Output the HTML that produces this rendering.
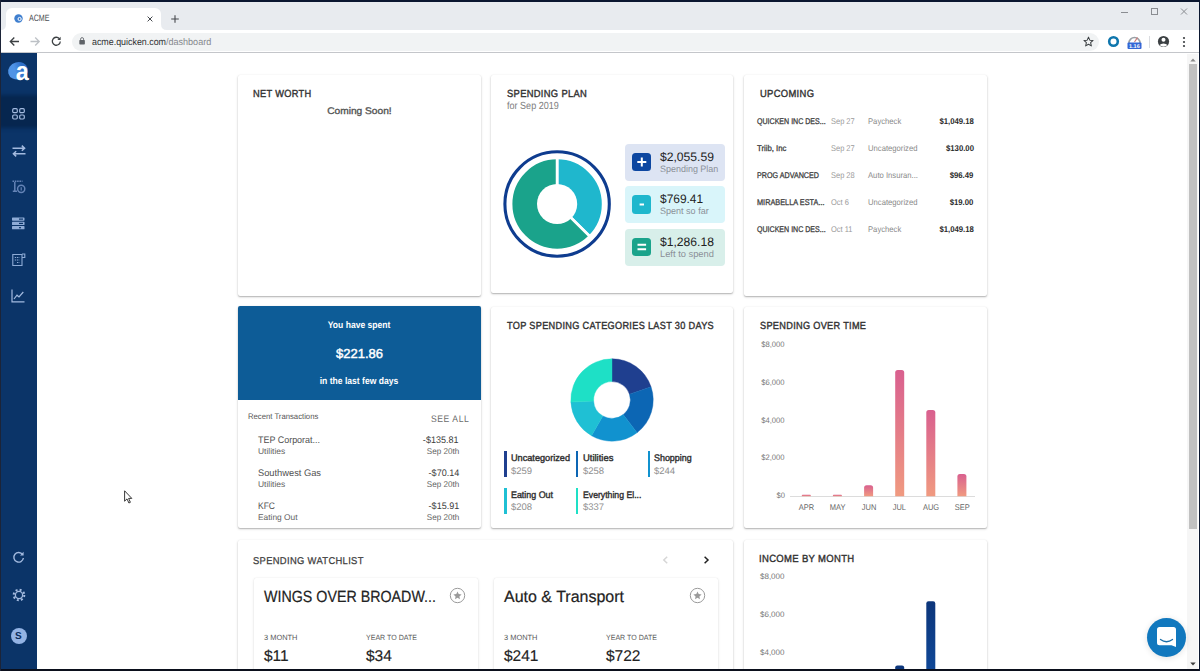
<!DOCTYPE html>
<html lang="en">
<head>
<meta charset="utf-8">
<title>ACME</title>
<style>
*{box-sizing:border-box;margin:0;padding:0}
html,body{width:1200px;height:671px;overflow:hidden;background:#0b1730;font-family:"Liberation Sans",sans-serif}
#root{position:absolute;left:0;top:0;width:1200px;height:671px;overflow:hidden}
.x{position:absolute;white-space:pre;display:block}
.card{position:absolute;background:#fff;border-radius:2px;box-shadow:0 1px 2.5px rgba(0,0,0,.22),0 1px 1px rgba(0,0,0,.12),0 0 1px rgba(0,0,0,.07)}
svg{position:absolute;overflow:visible}
</style>
</head>
<body>
<div id="root">
<div style="position:absolute;left:1px;top:2px;width:1198px;height:667px;background:#fff;"></div>
<div style="position:absolute;left:1px;top:2px;width:1198px;height:28px;background:#e8ebef;"></div>
<div style="position:absolute;left:6px;top:8px;width:155px;height:22px;background:#fff;border-radius:6px 6px 0 0;"></div>
<svg style="left:1px;top:24px" width="170" height="6" viewBox="0 0 170 6"><path d="M160 6V0Q160 6 166 6Z" fill="#fff"/><path d="M5 6V0Q5 6 0 6Z" fill="#fff"/></svg>
<svg style="left:14px;top:14px" width="9" height="9" viewBox="0 0 9 9"><circle cx="4.5" cy="4.5" r="4.2" fill="#3f7fcf"/><circle cx="5.6" cy="5" r="1.6" fill="none" stroke="#fff" stroke-width="1"/></svg>
<span class="x" style="left:29.00px;top:12.79px;font-size:9.2px;line-height:11.04px;color:#4a4d52;transform:scaleX(0.7722) rotate(.03deg);transform-origin:0 0;">ACME</span>
<svg style="left:147.3px;top:15.8px" width="6" height="6" viewBox="0 0 6 6"><path d="M0.6 0.6L5.4 5.4M5.4 0.6L0.6 5.4" stroke="#45484d" stroke-width="1" fill="none"/></svg>
<svg style="left:170.8px;top:14.7px" width="8" height="8" viewBox="0 0 8 8"><path d="M4 0.2V7.8M0.2 4H7.8" stroke="#45484d" stroke-width="1.1" fill="none"/></svg>
<svg style="left:1120px;top:7px" width="70" height="10" viewBox="0 0 70 10"><path d="M1 5.5H8" stroke="#8a8d92" stroke-width="1"/><rect x="31.5" y="1.5" width="6" height="6" fill="none" stroke="#8a8d92" stroke-width="1"/><path d="M61 1.5L67 7.5M67 1.5L61 7.5" stroke="#8a8d92" stroke-width="1"/></svg>
<div style="position:absolute;left:1px;top:30px;width:1198px;height:23px;background:#fff;"></div>
<div style="position:absolute;left:1px;top:52.4px;width:1198px;height:1.1px;background:#c4c6ca;"></div>
<svg style="left:9px;top:36px" width="56" height="11" viewBox="0 0 56 11"><path d="M10 5.5H1.5M5.3 1.5L1.3 5.5L5.3 9.5" stroke="#3c4043" stroke-width="1.3" fill="none"/><path d="M21.5 5.5H30M26.2 1.5L30.2 5.5L26.2 9.5" stroke="#bdc1c6" stroke-width="1.3" fill="none"/><path d="M50.3 2.6A4 4 0 1 0 51.3 5.5" stroke="#3c4043" stroke-width="1.3" fill="none"/><path d="M51.6 0.8V4H48.4Z" fill="#3c4043"/></svg>
<div style="position:absolute;left:72px;top:32.5px;width:1027px;height:18px;background:#f1f3f4;border-radius:9px;"></div>
<svg style="left:78.8px;top:37.2px" width="6.2" height="7.8" viewBox="0 0 7 9"><rect x="0.3" y="3.6" width="6.4" height="5" rx="0.8" fill="#5f6368"/><path d="M1.8 3.8V2.4A1.7 1.7 0 0 1 5.2 2.4V3.8" stroke="#5f6368" stroke-width="1" fill="none"/></svg>
<span class="x" style="left:92.30px;top:35.52px;font-size:9.7px;line-height:11.64px;color:#2e3033;transform:scaleX(0.9162) rotate(.03deg);transform-origin:0 0;">acme.quicken.com</span>
<span class="x" style="left:166.30px;top:35.52px;font-size:9.7px;line-height:11.64px;color:#85888d;transform:scaleX(0.9323) rotate(.03deg);transform-origin:0 0;">/dashboard</span>
<svg style="left:1083px;top:36px" width="11" height="11" viewBox="0 0 24 24"><path d="M12 2.5l2.9 6.6 7.1.7-5.4 4.8 1.6 7L12 17.9 5.8 21.6l1.6-7L2 9.8l7.1-.7z" fill="none" stroke="#3c4043" stroke-width="2.2" stroke-linejoin="round"/></svg>
<svg style="left:1107px;top:35px" width="13" height="13" viewBox="0 0 13 13"><circle cx="6.5" cy="6.5" r="4.3" fill="none" stroke="#0f76ad" stroke-width="2.6"/></svg>
<svg style="left:1126px;top:34px" width="17" height="16" viewBox="0 0 17 16"><path d="M3 9A5.5 5.5 0 0 1 14 9" fill="none" stroke="#9aa0a6" stroke-width="1.6"/><path d="M8.5 8L11.5 3.5" stroke="#c77" stroke-width="1.2"/><rect x="1.5" y="8.5" width="14" height="6.5" rx="1" fill="#3367d6"/></svg>
<span class="x" style="left:1129.14px;top:43.09px;font-size:5.5px;line-height:6.6px;color:#fff;font-weight:bold;transform:scaleX(1.0000) rotate(.03deg);transform-origin:50% 0;">1.16</span>
<div style="position:absolute;left:1149px;top:36px;width:1px;height:12px;background:#dadce0;"></div>
<svg style="left:1157px;top:35px" width="13" height="13" viewBox="0 0 13 13"><circle cx="6.5" cy="6.5" r="5.6" fill="#3c4043"/><circle cx="6.5" cy="4.8" r="2" fill="#fff"/><path d="M2.6 10A4.4 3 0 0 1 10.4 10A5.3 5.3 0 0 1 2.6 10Z" fill="#fff"/></svg>
<svg style="left:1182px;top:36px" width="4" height="12" viewBox="0 0 4 12"><circle cx="2" cy="2" r="1.1" fill="#3c4043"/><circle cx="2" cy="6" r="1.1" fill="#3c4043"/><circle cx="2" cy="10" r="1.1" fill="#3c4043"/></svg>
<div style="position:absolute;left:1px;top:53.4px;width:36px;height:616px;background:#0b3468;"></div>
<div style="position:absolute;left:1px;top:98px;width:36px;height:27px;background:#06264f;box-shadow:0 0 4px 3px #06264f;clip-path:inset(-8px 0 -8px 0);"></div>
<svg style="left:0;top:0" width="40" height="90" viewBox="0 0 40 90"><defs><linearGradient id="lg" x1="0" y1="0" x2="1" y2="0"><stop offset="0.35" stop-color="#4f94e6"/><stop offset="0.75" stop-color="#2f6fc8"/></linearGradient></defs><ellipse cx="18" cy="70.8" rx="10" ry="8.6" fill="url(#lg)" transform="rotate(-15 18 70.8)"/></svg>
<span class="x" style="left:14.57px;top:55.69px;font-size:26px;line-height:31.2px;color:#fff;font-weight:bold;transform:scaleX(0.9000) rotate(.03deg);transform-origin:50% 0;">a</span>
<svg style="left:12.3px;top:108px" width="13" height="12" viewBox="0 0 13 12" fill="none" stroke="#a3badf" stroke-width="1.2"><rect x="0.7" y="0.7" width="4.6" height="4" rx="1.2"/><rect x="7.7" y="0.7" width="4.6" height="4" rx="1.2"/><rect x="0.7" y="7" width="4.6" height="4" rx="1.2"/><rect x="7.7" y="7" width="4.6" height="4" rx="1.2"/></svg>
<svg style="left:11.5px;top:144.6px" width="14" height="12" viewBox="0 0 14 12" fill="none" stroke="#a3badf" stroke-width="1.5"><path d="M0.5 3.2H12.5M9.8 0.6L12.6 3.2L9.8 5.8"/><path d="M13.5 8.8H1.5M4.2 6.2L1.4 8.8L4.2 11.4"/></svg>
<svg style="left:11.5px;top:180px" width="14" height="14" viewBox="0 0 14 14" fill="none" stroke="#6483b6" stroke-width="1.5"><path d="M0.5 1.2H10.5" stroke-dasharray="1.6 0.7"/><path d="M2.8 2V11M0.8 11.2H5"/><circle cx="9.2" cy="8.8" r="3.6"/><path d="M9.2 7.2V10.4" stroke-width="1.2"/></svg>
<svg style="left:12px;top:217px" width="13" height="13" viewBox="0 0 13 13" fill="#8eabd6"><rect x="0" y="0.5" width="12.5" height="3.2" rx="0.6"/><rect x="0" y="4.8" width="12.5" height="3.2" rx="0.6"/><rect x="0" y="9.1" width="12.5" height="3.2" rx="0.6"/><rect x="7" y="1.5" width="4" height="1.2" fill="#0b3468"/><rect x="7" y="5.8" width="4" height="1.2" fill="#0b3468"/><rect x="7" y="10.1" width="2" height="1.2" fill="#0b3468"/></svg>
<svg style="left:12px;top:253px" width="14" height="14" viewBox="0 0 14 14" fill="none" stroke="#8eabd6" stroke-width="1.1"><path d="M0.8 1.5H10V12.5H0.8Z"/><path d="M10 1H12.8V4.5H10"/><path d="M2.8 4.5H7.5M2.8 7H7.5M5 9.5H7.5" stroke-dasharray="1.4 0.8"/></svg>
<svg style="left:11px;top:289px" width="14" height="14" viewBox="0 0 14 14" fill="none" stroke="#a3badf" stroke-width="1.2"><path d="M1 0.5V12.8H13.5"/><path d="M3 10L6 6.2L8 8L12.3 3"/></svg>
<svg style="left:12px;top:551px" width="13" height="13" viewBox="0 0 13 13" fill="none" stroke="#a3badf" stroke-width="1.4"><path d="M10.6 3.6A4.8 4.8 0 1 0 11.4 7"/><path d="M11.6 0.8V4.4H8" fill="#a3badf" stroke="none"/></svg>
<svg style="left:11.5px;top:588px" width="14" height="14" viewBox="0 0 14 14" fill="none" stroke="#a3badf"><circle cx="7" cy="7" r="3.6" stroke-width="1.3"/><circle cx="7" cy="7" r="5.3" stroke-width="2" stroke-dasharray="2 2.16"/></svg>
<div style="position:absolute;left:10.5px;top:627.5px;width:16px;height:16px;background:#93b3e4;border-radius:50%;"></div>
<span class="x" style="left:15.16px;top:629.94px;font-size:10px;line-height:12.0px;color:#0b2d5c;font-weight:bold;transform:scaleX(1.0000) rotate(.03deg);transform-origin:50% 0;">S</span>
<div class="card" style="left:237.7px;top:75px;width:243.1px;height:221.2px"></div>
<span class="x" style="left:253.20px;top:87.95px;font-size:10.3px;line-height:12.36px;color:#333;letter-spacing:0.35px;-webkit-text-stroke:0.4px;transform:scaleX(0.8985) rotate(.03deg);transform-origin:0 0;">NET WORTH</span>
<span class="x" style="left:328.60px;top:105.31px;font-size:9.6px;line-height:11.52px;color:#555;-webkit-text-stroke:0.35px;transform:scaleX(1.0609) rotate(.03deg);transform-origin:50% 0;">Coming Soon!</span>
<div class="card" style="left:491.2px;top:75px;width:242.2px;height:218.4px"></div>
<span class="x" style="left:506.50px;top:87.95px;font-size:10.3px;line-height:12.36px;color:#333;letter-spacing:0.35px;-webkit-text-stroke:0.4px;transform:scaleX(0.9095) rotate(.03deg);transform-origin:0 0;">SPENDING PLAN</span>
<span class="x" style="left:506.50px;top:100.00px;font-size:10.3px;line-height:12.36px;color:#7d7d7d;transform:scaleX(0.8784) rotate(.03deg);transform-origin:0 0;">for Sep 2019</span>
<svg style="left:0;top:0" width="1200" height="671" viewBox="0 0 1200 671"><path d="M557.10 156.00A48 48 0 0 1 591.19 237.79L564.20 211.04A10 10 0 0 0 557.10 194.00Z" fill="#1fb7cd" stroke="#fff" stroke-width="2.7"/><path d="M591.19 237.79A48 48 0 1 1 557.10 156.00L557.10 194.00A10 10 0 1 0 564.20 211.04Z" fill="#1aa38b" stroke="#fff" stroke-width="2.7"/><circle cx="557.1" cy="204" r="47.95" fill="none" stroke="#fff" stroke-width="6.5"/><circle cx="557.1" cy="204" r="20.1" fill="#fff"/><circle cx="557.1" cy="204" r="52.2" fill="none" stroke="#0e3c8f" stroke-width="3.1"/></svg>
<div style="position:absolute;left:624.6px;top:143.5px;width:100.9px;height:37.1px;background:#dde4f3;border-radius:4px;"></div>
<div style="position:absolute;left:632.4px;top:152.6px;width:18.8px;height:18.8px;background:#0d47a1;border-radius:3.5px;"></div>
<svg style="left:0;top:0" width="1200" height="671"><path d="M637.3 162.0H646.3M641.8 157.5V166.5" stroke="#fff" stroke-width="2" fill="none"/></svg>
<span class="x" style="left:659.90px;top:149.81px;font-size:12.25px;line-height:14.7px;color:#222;transform:scaleX(0.9890) rotate(.03deg);transform-origin:0 0;">$2,055.59</span>
<span class="x" style="left:659.70px;top:163.70px;font-size:9.3px;line-height:11.16px;color:#8b9098;transform:scaleX(0.9639) rotate(.03deg);transform-origin:0 0;">Spending Plan</span>
<div style="position:absolute;left:624.6px;top:186.0px;width:100.9px;height:37.1px;background:#d9f5fa;border-radius:4px;"></div>
<div style="position:absolute;left:632.4px;top:195.1px;width:18.8px;height:18.8px;background:#1fb7cd;border-radius:3.5px;"></div>
<svg style="left:0;top:0" width="1200" height="671"><path d="M639.5999999999999 204.5H644.0" stroke="#fff" stroke-width="2" fill="none"/></svg>
<span class="x" style="left:659.90px;top:192.31px;font-size:12.25px;line-height:14.7px;color:#222;transform:scaleX(0.9733) rotate(.03deg);transform-origin:0 0;">$769.41</span>
<span class="x" style="left:659.70px;top:206.20px;font-size:9.3px;line-height:11.16px;color:#8b9098;transform:scaleX(0.9713) rotate(.03deg);transform-origin:0 0;">Spent so far</span>
<div style="position:absolute;left:624.6px;top:228.5px;width:100.9px;height:37.1px;background:#d8efea;border-radius:4px;"></div>
<div style="position:absolute;left:632.4px;top:237.6px;width:18.8px;height:18.8px;background:#1aa38b;border-radius:3.5px;"></div>
<svg style="left:0;top:0" width="1200" height="671"><path d="M637.5 244.7H646.0999999999999M637.5 249.3H646.0999999999999" stroke="#fff" stroke-width="2" fill="none"/></svg>
<span class="x" style="left:659.90px;top:234.81px;font-size:12.25px;line-height:14.7px;color:#222;transform:scaleX(0.9890) rotate(.03deg);transform-origin:0 0;">$1,286.18</span>
<span class="x" style="left:659.70px;top:248.70px;font-size:9.3px;line-height:11.16px;color:#8b9098;transform:scaleX(1.0025) rotate(.03deg);transform-origin:0 0;">Left to spend</span>
<div class="card" style="left:744px;top:75px;width:243.1px;height:220.8px"></div>
<span class="x" style="left:759.50px;top:87.95px;font-size:10.3px;line-height:12.36px;color:#333;letter-spacing:0.35px;-webkit-text-stroke:0.4px;transform:scaleX(0.9139) rotate(.03deg);transform-origin:0 0;">UPCOMING</span>
<span class="x" style="left:757.00px;top:117.14px;font-size:8.3px;line-height:9.96px;color:#3f3f3f;-webkit-text-stroke:0.3px;transform:scaleX(0.8514) rotate(.03deg);transform-origin:0 0;">QUICKEN INC DES...</span>
<span class="x" style="left:831.00px;top:117.14px;font-size:8.3px;line-height:9.96px;color:#9a9a9a;transform:scaleX(0.9000) rotate(.03deg);transform-origin:0 0;">Sep 27</span>
<span class="x" style="left:868.00px;top:117.14px;font-size:8.3px;line-height:9.96px;color:#8a8a8a;transform:scaleX(0.9250) rotate(.03deg);transform-origin:0 0;">Paycheck</span>
<span class="x" style="right:226.20px;top:117.14px;font-size:8.3px;line-height:9.96px;color:#2a2a2a;font-weight:bold;transform:scaleX(0.9350) rotate(.03deg);transform-origin:100% 0;">$1,049.18</span>
<span class="x" style="left:757.00px;top:144.19px;font-size:8.3px;line-height:9.96px;color:#3f3f3f;-webkit-text-stroke:0.3px;transform:scaleX(0.9360) rotate(.03deg);transform-origin:0 0;">Triib, Inc</span>
<span class="x" style="left:831.00px;top:144.19px;font-size:8.3px;line-height:9.96px;color:#9a9a9a;transform:scaleX(0.9000) rotate(.03deg);transform-origin:0 0;">Sep 27</span>
<span class="x" style="left:868.00px;top:144.19px;font-size:8.3px;line-height:9.96px;color:#8a8a8a;transform:scaleX(0.9250) rotate(.03deg);transform-origin:0 0;">Uncategorized</span>
<span class="x" style="right:226.20px;top:144.19px;font-size:8.3px;line-height:9.96px;color:#2a2a2a;font-weight:bold;transform:scaleX(0.9350) rotate(.03deg);transform-origin:100% 0;">$130.00</span>
<span class="x" style="left:757.00px;top:171.24px;font-size:8.3px;line-height:9.96px;color:#3f3f3f;-webkit-text-stroke:0.3px;transform:scaleX(0.8637) rotate(.03deg);transform-origin:0 0;">PROG ADVANCED</span>
<span class="x" style="left:831.00px;top:171.24px;font-size:8.3px;line-height:9.96px;color:#9a9a9a;transform:scaleX(0.9000) rotate(.03deg);transform-origin:0 0;">Sep 28</span>
<span class="x" style="left:868.00px;top:171.24px;font-size:8.3px;line-height:9.96px;color:#8a8a8a;transform:scaleX(0.9250) rotate(.03deg);transform-origin:0 0;">Auto Insuran...</span>
<span class="x" style="right:226.20px;top:171.24px;font-size:8.3px;line-height:9.96px;color:#2a2a2a;font-weight:bold;transform:scaleX(0.9350) rotate(.03deg);transform-origin:100% 0;">$96.49</span>
<span class="x" style="left:757.00px;top:198.29px;font-size:8.3px;line-height:9.96px;color:#3f3f3f;-webkit-text-stroke:0.3px;transform:scaleX(0.8836) rotate(.03deg);transform-origin:0 0;">MIRABELLA ESTA...</span>
<span class="x" style="left:831.00px;top:198.29px;font-size:8.3px;line-height:9.96px;color:#9a9a9a;transform:scaleX(0.9000) rotate(.03deg);transform-origin:0 0;">Oct 6</span>
<span class="x" style="left:868.00px;top:198.29px;font-size:8.3px;line-height:9.96px;color:#8a8a8a;transform:scaleX(0.9250) rotate(.03deg);transform-origin:0 0;">Uncategorized</span>
<span class="x" style="right:226.20px;top:198.29px;font-size:8.3px;line-height:9.96px;color:#2a2a2a;font-weight:bold;transform:scaleX(0.9350) rotate(.03deg);transform-origin:100% 0;">$19.00</span>
<span class="x" style="left:757.00px;top:225.34px;font-size:8.3px;line-height:9.96px;color:#3f3f3f;-webkit-text-stroke:0.3px;transform:scaleX(0.8514) rotate(.03deg);transform-origin:0 0;">QUICKEN INC DES...</span>
<span class="x" style="left:831.00px;top:225.34px;font-size:8.3px;line-height:9.96px;color:#9a9a9a;transform:scaleX(0.9000) rotate(.03deg);transform-origin:0 0;">Oct 11</span>
<span class="x" style="left:868.00px;top:225.34px;font-size:8.3px;line-height:9.96px;color:#8a8a8a;transform:scaleX(0.9250) rotate(.03deg);transform-origin:0 0;">Paycheck</span>
<span class="x" style="right:226.20px;top:225.34px;font-size:8.3px;line-height:9.96px;color:#2a2a2a;font-weight:bold;transform:scaleX(0.9350) rotate(.03deg);transform-origin:100% 0;">$1,049.18</span>
<div class="card" style="left:237.7px;top:306.3px;width:243.1px;height:221.4px"></div>
<div style="position:absolute;left:237.7px;top:306.3px;width:243.1px;height:93.7px;background:#0d5c97;border-radius:2px 2px 0 0;"></div>
<span class="x" style="left:323.90px;top:319.21px;font-size:9.6px;line-height:11.52px;color:#fff;font-weight:bold;transform:scaleX(0.8917) rotate(.03deg);transform-origin:50% 0;">You have spent</span>
<span class="x" style="left:335.50px;top:346.30px;font-size:13px;line-height:15.6px;color:#fff;-webkit-text-stroke:0.45px;transform:scaleX(1.0000) rotate(.03deg);transform-origin:50% 0;">$221.86</span>
<span class="x" style="left:315.01px;top:375.11px;font-size:9.6px;line-height:11.52px;color:#fff;font-weight:bold;transform:scaleX(0.8933) rotate(.03deg);transform-origin:50% 0;">in the last few days</span>
<span class="x" style="left:247.70px;top:412.03px;font-size:8px;line-height:9.6px;color:#555;transform:scaleX(0.9638) rotate(.03deg);transform-origin:0 0;">Recent Transactions</span>
<span class="x" style="left:431.00px;top:413.31px;font-size:9.5px;line-height:11.4px;color:#6b6b6b;letter-spacing:0.6px;transform:scaleX(0.9079) rotate(.03deg);transform-origin:0 0;">SEE ALL</span>
<span class="x" style="left:257.80px;top:434.21px;font-size:9.5px;line-height:11.4px;color:#505050;transform:scaleX(0.9418) rotate(.03deg);transform-origin:0 0;">TEP Corporat...</span>
<span class="x" style="left:257.80px;top:447.24px;font-size:8.3px;line-height:9.96px;color:#636363;transform:scaleX(1.0168) rotate(.03deg);transform-origin:0 0;">Utilities</span>
<span class="x" style="right:741.10px;top:434.21px;font-size:9.5px;line-height:11.4px;color:#3c3c3c;transform:scaleX(0.9500) rotate(.03deg);transform-origin:100% 0;">-$135.81</span>
<span class="x" style="right:740.50px;top:447.24px;font-size:8.3px;line-height:9.96px;color:#636363;transform:scaleX(0.9750) rotate(.03deg);transform-origin:100% 0;">Sep 20th</span>
<span class="x" style="left:257.80px;top:467.11px;font-size:9.5px;line-height:11.4px;color:#505050;transform:scaleX(0.9779) rotate(.03deg);transform-origin:0 0;">Southwest Gas</span>
<span class="x" style="left:257.80px;top:480.14px;font-size:8.3px;line-height:9.96px;color:#636363;transform:scaleX(1.0168) rotate(.03deg);transform-origin:0 0;">Utilities</span>
<span class="x" style="right:741.10px;top:467.11px;font-size:9.5px;line-height:11.4px;color:#3c3c3c;transform:scaleX(0.9500) rotate(.03deg);transform-origin:100% 0;">-$70.14</span>
<span class="x" style="right:740.50px;top:480.14px;font-size:8.3px;line-height:9.96px;color:#636363;transform:scaleX(0.9750) rotate(.03deg);transform-origin:100% 0;">Sep 20th</span>
<span class="x" style="left:257.80px;top:500.01px;font-size:9.5px;line-height:11.4px;color:#505050;transform:scaleX(0.8947) rotate(.03deg);transform-origin:0 0;">KFC</span>
<span class="x" style="left:257.80px;top:513.04px;font-size:8.3px;line-height:9.96px;color:#636363;transform:scaleX(1.0097) rotate(.03deg);transform-origin:0 0;">Eating Out</span>
<span class="x" style="right:741.10px;top:500.01px;font-size:9.5px;line-height:11.4px;color:#3c3c3c;transform:scaleX(0.9500) rotate(.03deg);transform-origin:100% 0;">-$15.91</span>
<span class="x" style="right:740.50px;top:513.04px;font-size:8.3px;line-height:9.96px;color:#636363;transform:scaleX(0.9750) rotate(.03deg);transform-origin:100% 0;">Sep 20th</span>
<div class="card" style="left:491.2px;top:306.5px;width:242.2px;height:221.2px"></div>
<span class="x" style="left:507.30px;top:320.45px;font-size:10.3px;line-height:12.36px;color:#333;letter-spacing:0.35px;-webkit-text-stroke:0.4px;transform:scaleX(0.8903) rotate(.03deg);transform-origin:0 0;">TOP SPENDING CATEGORIES LAST 30 DAYS</span>
<svg style="left:0;top:0" width="1200" height="671" viewBox="0 0 1200 671"><path d="M612.00 358.80A41.2 41.2 0 0 1 651.05 386.85L629.44 394.13A18.4 18.4 0 0 0 612.00 381.60Z" fill="#1f3f8f" stroke="#1f3f8f" stroke-width="0.4"/><path d="M651.05 386.85A41.2 41.2 0 0 1 637.07 432.69L623.20 414.60A18.4 18.4 0 0 0 629.44 394.13Z" fill="#0c66b4" stroke="#0c66b4" stroke-width="0.4"/><path d="M637.07 432.69A41.2 41.2 0 0 1 591.54 435.76L602.86 415.97A18.4 18.4 0 0 0 623.20 414.60Z" fill="#1192cf" stroke="#1192cf" stroke-width="0.4"/><path d="M591.54 435.76A41.2 41.2 0 0 1 570.85 402.08L593.62 400.93A18.4 18.4 0 0 0 602.86 415.97Z" fill="#1fc0d4" stroke="#1fc0d4" stroke-width="0.4"/><path d="M570.85 402.08A41.2 41.2 0 0 1 612.00 358.80L612.00 381.60A18.4 18.4 0 0 0 593.62 400.93Z" fill="#1ee0c6" stroke="#1ee0c6" stroke-width="0.4"/></svg>
<div style="position:absolute;left:504.2px;top:451px;width:2.4px;height:26.2px;background:#1f3f8f;"></div>
<span class="x" style="left:511.10px;top:451.91px;font-size:9.5px;line-height:11.4px;color:#2f2f2f;-webkit-text-stroke:0.4px;transform:scaleX(0.9630) rotate(.03deg);transform-origin:0 0;">Uncategorized</span>
<span class="x" style="left:511.10px;top:464.61px;font-size:9.5px;line-height:11.4px;color:#8f8f8f;transform:scaleX(1.0000) rotate(.03deg);transform-origin:0 0;">$259</span>
<div style="position:absolute;left:575.7px;top:451px;width:2.4px;height:26.2px;background:#0c66b4;"></div>
<span class="x" style="left:582.60px;top:451.91px;font-size:9.5px;line-height:11.4px;color:#2f2f2f;-webkit-text-stroke:0.4px;transform:scaleX(0.9927) rotate(.03deg);transform-origin:0 0;">Utilities</span>
<span class="x" style="left:582.60px;top:464.61px;font-size:9.5px;line-height:11.4px;color:#8f8f8f;transform:scaleX(1.0000) rotate(.03deg);transform-origin:0 0;">$258</span>
<div style="position:absolute;left:647.5px;top:451px;width:2.4px;height:26.2px;background:#1192cf;"></div>
<span class="x" style="left:654.40px;top:451.91px;font-size:9.5px;line-height:11.4px;color:#2f2f2f;-webkit-text-stroke:0.4px;transform:scaleX(0.9363) rotate(.03deg);transform-origin:0 0;">Shopping</span>
<span class="x" style="left:654.40px;top:464.61px;font-size:9.5px;line-height:11.4px;color:#8f8f8f;transform:scaleX(1.0000) rotate(.03deg);transform-origin:0 0;">$244</span>
<div style="position:absolute;left:504.2px;top:487.6px;width:2.4px;height:26.2px;background:#1fc0d4;"></div>
<span class="x" style="left:511.10px;top:488.51px;font-size:9.5px;line-height:11.4px;color:#2f2f2f;-webkit-text-stroke:0.4px;transform:scaleX(0.9356) rotate(.03deg);transform-origin:0 0;">Eating Out</span>
<span class="x" style="left:511.10px;top:501.21px;font-size:9.5px;line-height:11.4px;color:#8f8f8f;transform:scaleX(1.0000) rotate(.03deg);transform-origin:0 0;">$208</span>
<div style="position:absolute;left:575.7px;top:487.6px;width:2.4px;height:26.2px;background:#1ee0c6;"></div>
<span class="x" style="left:582.60px;top:488.51px;font-size:9.5px;line-height:11.4px;color:#2f2f2f;-webkit-text-stroke:0.4px;transform:scaleX(0.9141) rotate(.03deg);transform-origin:0 0;">Everything El...</span>
<span class="x" style="left:582.60px;top:501.21px;font-size:9.5px;line-height:11.4px;color:#8f8f8f;transform:scaleX(1.0000) rotate(.03deg);transform-origin:0 0;">$337</span>
<div class="card" style="left:744px;top:306.5px;width:243.1px;height:221.2px"></div>
<span class="x" style="left:759.80px;top:320.45px;font-size:10.3px;line-height:12.36px;color:#333;letter-spacing:0.35px;-webkit-text-stroke:0.4px;transform:scaleX(0.8903) rotate(.03deg);transform-origin:0 0;">SPENDING OVER TIME</span>
<span class="x" style="right:415.60px;top:339.93px;font-size:8px;line-height:9.6px;color:#777;transform:scaleX(0.9500) rotate(.03deg);transform-origin:100% 0;">$8,000</span>
<span class="x" style="right:415.60px;top:377.78px;font-size:8px;line-height:9.6px;color:#777;transform:scaleX(0.9500) rotate(.03deg);transform-origin:100% 0;">$6,000</span>
<span class="x" style="right:415.60px;top:415.63px;font-size:8px;line-height:9.6px;color:#777;transform:scaleX(0.9500) rotate(.03deg);transform-origin:100% 0;">$4,000</span>
<span class="x" style="right:415.60px;top:453.48px;font-size:8px;line-height:9.6px;color:#777;transform:scaleX(0.9500) rotate(.03deg);transform-origin:100% 0;">$2,000</span>
<span class="x" style="right:415.60px;top:491.33px;font-size:8px;line-height:9.6px;color:#777;transform:scaleX(0.9500) rotate(.03deg);transform-origin:100% 0;">$0</span>
<div style="position:absolute;left:790px;top:496px;width:185px;height:1px;background:#dcdcdc;"></div>
<svg style="left:0;top:0" width="1200" height="671" viewBox="0 0 1200 671"><defs><linearGradient id="pk" x1="0" y1="0" x2="0" y2="1"><stop offset="0" stop-color="#d9608f"/><stop offset="1" stop-color="#f09a80"/></linearGradient></defs><path d="M801.80 496.3V495.55Q801.80 494.80 802.55 494.80H810.05Q810.80 494.80 810.80 495.55V496.3Z" fill="url(#pk)"/><path d="M832.90 496.3V495.55Q832.90 494.80 833.65 494.80H841.15Q841.90 494.80 841.90 495.55V496.3Z" fill="url(#pk)"/><path d="M864.10 496.3V487.70Q864.10 485.20 866.60 485.20H870.60Q873.10 485.20 873.10 487.70V496.3Z" fill="url(#pk)"/><path d="M895.20 496.3V372.50Q895.20 370.00 897.70 370.00H901.70Q904.20 370.00 904.20 372.50V496.3Z" fill="url(#pk)"/><path d="M926.30 496.3V412.60Q926.30 410.10 928.80 410.10H932.80Q935.30 410.10 935.30 412.60V496.3Z" fill="url(#pk)"/><path d="M957.40 496.3V476.50Q957.40 474.00 959.90 474.00H963.90Q966.40 474.00 966.40 476.50V496.3Z" fill="url(#pk)"/></svg>
<span class="x" style="left:797.77px;top:502.54px;font-size:8.3px;line-height:9.96px;color:#666;transform:scaleX(0.9000) rotate(.03deg);transform-origin:50% 0;">APR</span>
<span class="x" style="left:828.71px;top:502.54px;font-size:8.3px;line-height:9.96px;color:#666;transform:scaleX(0.9000) rotate(.03deg);transform-origin:50% 0;">MAY</span>
<span class="x" style="left:860.53px;top:502.54px;font-size:8.3px;line-height:9.96px;color:#666;transform:scaleX(0.9000) rotate(.03deg);transform-origin:50% 0;">JUN</span>
<span class="x" style="left:892.32px;top:502.54px;font-size:8.3px;line-height:9.96px;color:#666;transform:scaleX(0.9000) rotate(.03deg);transform-origin:50% 0;">JUL</span>
<span class="x" style="left:921.81px;top:502.54px;font-size:8.3px;line-height:9.96px;color:#666;transform:scaleX(0.9000) rotate(.03deg);transform-origin:50% 0;">AUG</span>
<span class="x" style="left:953.60px;top:502.54px;font-size:8.3px;line-height:9.96px;color:#666;transform:scaleX(0.9000) rotate(.03deg);transform-origin:50% 0;">SEP</span>
<div class="card" style="left:237.7px;top:539.7px;width:495.7px;height:200px"></div>
<span class="x" style="left:253.00px;top:554.83px;font-size:9.9px;line-height:11.88px;color:#3c3c3c;letter-spacing:0.35px;-webkit-text-stroke:0.25px;transform:scaleX(0.9499) rotate(.03deg);transform-origin:0 0;">SPENDING WATCHLIST</span>
<svg style="left:660px;top:555px" width="52" height="10" viewBox="0 0 52 10" fill="none" stroke-width="1.5"><path d="M7.2 1.7L3.8 5L7.2 8.3" stroke="#d6d6d6"/><path d="M44.6 1.7L48 5L44.6 8.3" stroke="#222"/></svg>
<div class="card" style="left:253.5px;top:577.5px;width:224px;height:150px;box-shadow:0 1px 3px rgba(0,0,0,.12),0 0 1px rgba(0,0,0,.12)"></div>
<span class="x" style="left:264.00px;top:586.77px;font-size:16.2px;line-height:19.44px;color:#222;-webkit-text-stroke:0.2px;transform:scaleX(0.8813) rotate(.03deg);transform-origin:0 0;">WINGS OVER BROADW...</span>
<svg style="left:450px;top:588px" width="15" height="15" viewBox="0 0 15 15"><circle cx="7.5" cy="7.5" r="7.2" fill="#fff" stroke="#9a9a9a" stroke-width="1"/><path d="M7.5 3.4l1.2 2.7 2.9.3-2.2 2 .6 2.9-2.5-1.5-2.5 1.5.6-2.9-2.2-2 2.9-.3z" fill="#9a9a9a"/></svg>
<span class="x" style="left:264.00px;top:633.00px;font-size:7.5px;line-height:9.0px;color:#5a5a5a;transform:scaleX(0.9926) rotate(.03deg);transform-origin:0 0;">3 MONTH</span>
<span class="x" style="left:365.60px;top:633.00px;font-size:7.5px;line-height:9.0px;color:#5a5a5a;transform:scaleX(0.9412) rotate(.03deg);transform-origin:0 0;">YEAR TO DATE</span>
<span class="x" style="left:264.00px;top:646.83px;font-size:15.5px;line-height:18.6px;color:#222;-webkit-text-stroke:0.15px;transform:scaleX(1.0000) rotate(.03deg);transform-origin:0 0;">$11</span>
<span class="x" style="left:365.60px;top:646.83px;font-size:15.5px;line-height:18.6px;color:#222;-webkit-text-stroke:0.15px;transform:scaleX(1.0000) rotate(.03deg);transform-origin:0 0;">$34</span>
<div class="card" style="left:493.5px;top:577.5px;width:224px;height:150px;box-shadow:0 1px 3px rgba(0,0,0,.12),0 0 1px rgba(0,0,0,.12)"></div>
<span class="x" style="left:504.00px;top:586.77px;font-size:16.2px;line-height:19.44px;color:#222;-webkit-text-stroke:0.2px;transform:scaleX(0.9878) rotate(.03deg);transform-origin:0 0;">Auto &amp; Transport</span>
<svg style="left:690px;top:588px" width="15" height="15" viewBox="0 0 15 15"><circle cx="7.5" cy="7.5" r="7.2" fill="#fff" stroke="#9a9a9a" stroke-width="1"/><path d="M7.5 3.4l1.2 2.7 2.9.3-2.2 2 .6 2.9-2.5-1.5-2.5 1.5.6-2.9-2.2-2 2.9-.3z" fill="#9a9a9a"/></svg>
<span class="x" style="left:504.00px;top:633.00px;font-size:7.5px;line-height:9.0px;color:#5a5a5a;transform:scaleX(0.9926) rotate(.03deg);transform-origin:0 0;">3 MONTH</span>
<span class="x" style="left:605.60px;top:633.00px;font-size:7.5px;line-height:9.0px;color:#5a5a5a;transform:scaleX(0.9412) rotate(.03deg);transform-origin:0 0;">YEAR TO DATE</span>
<span class="x" style="left:504.00px;top:646.83px;font-size:15.5px;line-height:18.6px;color:#222;-webkit-text-stroke:0.15px;transform:scaleX(1.0000) rotate(.03deg);transform-origin:0 0;">$241</span>
<span class="x" style="left:605.60px;top:646.83px;font-size:15.5px;line-height:18.6px;color:#222;-webkit-text-stroke:0.15px;transform:scaleX(1.0000) rotate(.03deg);transform-origin:0 0;">$722</span>
<div class="card" style="left:744px;top:539.7px;width:243.1px;height:200px"></div>
<span class="x" style="left:759.40px;top:552.75px;font-size:10.3px;line-height:12.36px;color:#333;letter-spacing:0.35px;-webkit-text-stroke:0.4px;transform:scaleX(0.9232) rotate(.03deg);transform-origin:0 0;">INCOME BY MONTH</span>
<span class="x" style="right:415.70px;top:571.93px;font-size:8px;line-height:9.6px;color:#777;transform:scaleX(1.0000) rotate(.03deg);transform-origin:100% 0;">$8,000</span>
<span class="x" style="right:415.70px;top:609.93px;font-size:8px;line-height:9.6px;color:#777;transform:scaleX(1.0000) rotate(.03deg);transform-origin:100% 0;">$6,000</span>
<span class="x" style="right:415.70px;top:647.93px;font-size:8px;line-height:9.6px;color:#777;transform:scaleX(1.0000) rotate(.03deg);transform-origin:100% 0;">$4,000</span>
<svg style="left:0;top:0" width="1200" height="671" viewBox="0 0 1200 671"><defs><linearGradient id="nv" x1="0" y1="0" x2="0" y2="1"><stop offset="0" stop-color="#0c357a"/><stop offset="1" stop-color="#1250a4"/></linearGradient></defs><path d="M895.20 700V667.60Q895.20 665.40 897.40 665.40H902.00Q904.20 665.40 904.20 667.60V700Z" fill="url(#nv)"/><path d="M926.30 700V603.50Q926.30 601.30 928.50 601.30H933.10Q935.30 601.30 935.30 603.50V700Z" fill="url(#nv)"/></svg>
<div style="position:absolute;left:1186.5px;top:53.5px;width:11.5px;height:616px;background:#f6f6f6;"></div>
<div style="position:absolute;left:1189px;top:64.3px;width:8.2px;height:464.3px;background:#c1c1c1;"></div>
<svg style="left:1190.4px;top:57.6px" width="6" height="4" viewBox="0 0 6 4"><path d="M0.3 3.6L3 0.6L5.7 3.6Z" fill="#8a8a8a"/></svg>
<svg style="left:1190.4px;top:662px" width="6" height="4" viewBox="0 0 6 4"><path d="M0.3 0.4L3 3.4L5.7 0.4Z" fill="#3a3a3a"/></svg>
<div style="position:absolute;left:1147px;top:617.5px;width:39px;height:39px;background:#1178be;border-radius:50%;box-shadow:0 1px 6px rgba(0,0,0,.12);"></div>
<svg style="left:1156px;top:626px" width="21" height="22" viewBox="0 0 21 22"><path d="M3.5 1H17.5A2.5 2.5 0 0 1 20 3.5V21L15.5 19.2H3.5A2.5 2.5 0 0 1 1 16.7V3.5A2.5 2.5 0 0 1 3.5 1Z" fill="#fff"/><path d="M4.5 13.5Q10.5 18 16.5 13.5" fill="none" stroke="#1d6fa8" stroke-width="1.3" stroke-linecap="round"/></svg>
<svg style="left:124px;top:490px" width="9" height="14" viewBox="0 0 9 14"><path d="M0.6 0.8V11.2L3 8.9L4.9 13L6.4 12.3L4.6 8.4H7.8Z" fill="#fff" stroke="#222" stroke-width="0.9" stroke-linejoin="round"/></svg>
<div style="position:absolute;left:0px;top:0px;width:1200px;height:2px;background:#0b1730;"></div>
<div style="position:absolute;left:0px;top:669.3px;width:1200px;height:1.7px;background:#0b0f1c;"></div>
<div style="position:absolute;left:0px;top:0px;width:1px;height:671px;background:#1c2438;"></div>
<div style="position:absolute;left:1198.5px;top:0px;width:1.5px;height:671px;background:#0b1730;"></div>
</div>
</body>
</html>
